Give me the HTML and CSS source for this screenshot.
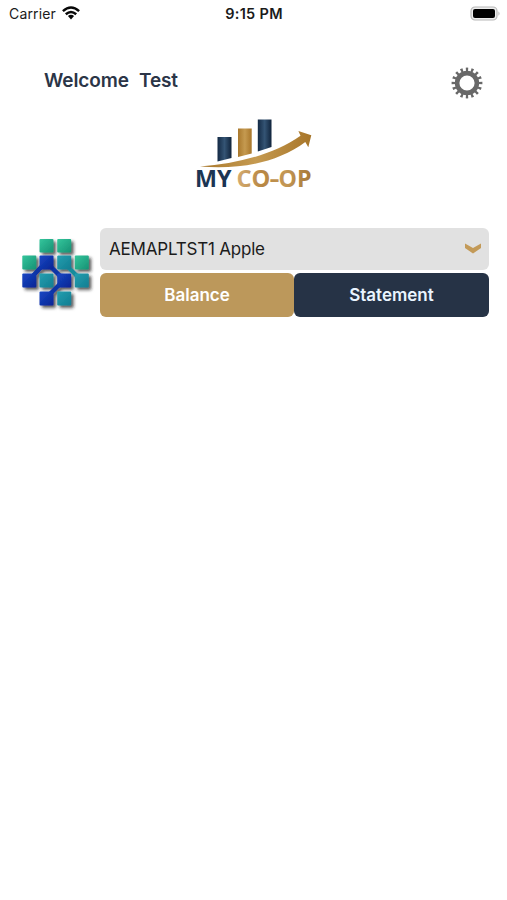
FILE: index.html
```html
<!DOCTYPE html>
<html lang="en">
<head>
<meta charset="utf-8">
<title>My Co-op</title>
<link rel="stylesheet" href="styles.css">
</head>
<body>
<div class="status">
  <div class="carrier"><span class="carrier-name">Carrier</span>
    <svg class="wifi" viewBox="0 0 18 14"><g fill="none" stroke="#080808" stroke-width="2.5"><path d="M.9 5.1Q9-2.1 17.1 5.1"/><path d="M3.8 8.2Q9 3.7 14.2 8.2"/></g><path d="M5.9 10.1Q9 7.5 12.1 10.1L9 13.5Z" fill="#080808"/></svg>
  </div>
  <time class="time">9:15 PM</time>
  <svg class="battery" viewBox="0 0 31 16"><rect x="1" y="1" width="26" height="13" rx="4" fill="#ededed" stroke="#b8b8b8" stroke-width="1.2"/><rect x="3" y="3" width="22" height="9" rx="2" fill="#000"/><path d="M28.5 5.2Q30.5 7.5 28.5 9.8Z" fill="#aaa"/></svg>
</div>
<header class="header">
  <h1 class="welcome"><span>Welcome</span><span>Test</span></h1>
  <svg class="gear" viewBox="-16 -16 32 32"><g fill="none" stroke="#686868"><circle r="9.9" stroke-width="4.6"/><circle r="13.4" stroke-width="4" pathLength="160" stroke-dasharray="4.4 5.6" stroke-dashoffset="2.2"/></g></svg>
</header>
<svg class="logo" viewBox="185 110 140 85">
  <defs>
    <linearGradient id="navy"><stop offset="0" stop-color="#142a45"/><stop offset=".5" stop-color="#345474"/><stop offset="1" stop-color="#10233b"/></linearGradient>
    <linearGradient id="gold"><stop offset="0" stop-color="#a9782c"/><stop offset=".5" stop-color="#c59a50"/><stop offset="1" stop-color="#a8762a"/></linearGradient>
    <linearGradient id="lettering" gradientUnits="userSpaceOnUse" x1="237" y1="0" x2="311" y2="0"><stop offset="0" stop-color="#d4ab70"/><stop offset=".35" stop-color="#b78643"/><stop offset=".65" stop-color="#c49856"/><stop offset="1" stop-color="#a77837"/></linearGradient>
  </defs>
  <path d="M217.5 137H231.5V158L217.5 161.5Z" fill="url(#navy)"/>
  <path d="M238 128.5H251.7V153.5L238 157Z" fill="url(#gold)"/>
  <path d="M257.8 119.5H271.5V147L257.8 151.5Z" fill="url(#navy)"/>
  <path d="M200 166.6C237 163.5 273 155 300.5 135.8L298.4 131L311.3 135.2L308.3 147.2L305.3 142C278 162 242 170 200 166.6Z" fill="url(#gold)"/>
  <g class="logo-text"><text x="195" y="187.3" textLength="36.5" lengthAdjust="spacingAndGlyphs" fill="#1c3553">MY</text><g fill="url(#lettering)"><text x="236.5" y="187.3" textLength="34" lengthAdjust="spacingAndGlyphs">CO</text><text x="269.5" y="187.3" textLength="10" lengthAdjust="spacingAndGlyphs">-</text><text x="278.5" y="187.3" textLength="33" lengthAdjust="spacingAndGlyphs">OP</text></g></g>
</svg>
<main class="account">
  <svg class="emblem" viewBox="18 230 80 85">
    <defs>
      <linearGradient id="green" x2="1" y2="1"><stop stop-color="#35c69c"/><stop offset="1" stop-color="#169174"/></linearGradient>
      <linearGradient id="teal" x2="1" y2="1"><stop stop-color="#249fb0"/><stop offset="1" stop-color="#127d91"/></linearGradient>
      <linearGradient id="blue" x2="1" y2="1"><stop stop-color="#1748c4"/><stop offset="1" stop-color="#092494"/></linearGradient>
      <filter id="shadow" x="-20%" y="-20%" width="150%" height="150%"><feDropShadow dx="2.4" dy="2.4" stdDeviation="1.5" flood-color="#222" flood-opacity=".75"/></filter>
    </defs>
    <g filter="url(#shadow)">
      <path d="M63 262L81 280" stroke="#168b9c" stroke-width="4"/>
      <path d="M29 280L46 262L64 280L46 298" fill="none" stroke="#1034a5" stroke-width="4.5"/>
      <g fill="url(#green)"><rect x="39.5" y="239" width="14" height="13.5" rx="1"/><rect x="57.2" y="239" width="14" height="13.5" rx="1"/><rect x="22.3" y="255.5" width="14" height="14" rx="1"/><rect x="74.8" y="255.5" width="14" height="14" rx="1"/></g>
      <g fill="url(#teal)"><rect x="57.2" y="255.5" width="14" height="14" rx="1"/><rect x="39.5" y="273.5" width="14" height="14" rx="1"/><rect x="74.8" y="273.5" width="14" height="14" rx="1"/><rect x="57.2" y="291.5" width="14" height="14" rx="1"/></g>
      <g fill="url(#blue)"><rect x="39.5" y="255.5" width="14" height="14" rx="1"/><rect x="22.3" y="273.5" width="14" height="14" rx="1"/><rect x="57.2" y="273.5" width="14" height="14" rx="1"/><rect x="39.5" y="291.5" width="14" height="14" rx="1"/></g>
    </g>
  </svg>
  <div class="controls">
    <div class="select"><span>AEMAPLTST1 Apple</span><svg class="chevron" viewBox="0 0 16 11"><path d="M0 .5L8 5L16 .5V5L8 10.5L0 5Z" fill="#c39a58"/></svg></div>
    <div class="buttons"><button class="btn balance">Balance</button><button class="btn statement">Statement</button></div>
  </div>
</main>
</body>
</html>
```
FILE: styles.css
```css
* { box-sizing: border-box; }
body { margin: 0; height: 900px; background: #fff; font-family: Inter, "Liberation Sans", sans-serif; color: #1b1b1b; }
svg { display: block; flex: none; }
.status { height: 28px; padding: 0 6px 0 9px; display: grid; grid-template-columns: 1fr auto 1fr; align-items: center; }
.carrier { display: flex; align-items: center; gap: 6px; font-size: 14px; line-height: 28px; }
.carrier-name { letter-spacing: .15px; }
.wifi { width: 18px; height: 14px; margin-top: -2px; }
.time { font-size: 14.5px; font-weight: 600; letter-spacing: .3px; margin: -1px 2px 0 0; }
.battery { width: 31px; height: 16px; justify-self: end; margin-top: -1px; }
.header { height: 82px; padding: 39px 24px 0 44px; display: flex; justify-content: space-between; align-items: flex-start; }
.welcome { margin: 1px 0 0; display: flex; gap: 10px; font-size: 19px; line-height: 26px; font-weight: 600; letter-spacing: -.1px; color: #2b3547; }
.gear { width: 32px; height: 32px; }
.logo { width: 140px; height: 85px; margin-left: 185px; }
.logo-text { font: bold 23px "Open Sans", sans-serif; }
.account { margin: 33px 18px 0; display: flex; }
.emblem { width: 80px; height: 85px; margin-top: 2px; }
.controls { flex: 1; margin-left: 2px; }
.select { height: 42px; padding: 0 8px 0 9px; border-radius: 6px; background: #e1e1e1; display: flex; align-items: center; justify-content: space-between; font-size: 17px; letter-spacing: -.2px; }
.chevron { width: 16px; height: 11px; margin-top: -2px; }
.buttons { display: flex; margin-top: 3px; }
.btn { flex: 1; height: 44px; padding: 0; border: 0; border-radius: 6px; font: 600 17px Inter, sans-serif; color: #fff; }
.balance { flex: 0 0 194px; background: #bc985b; }
.statement { background: #263346; color: #eaf5ff; }
```
